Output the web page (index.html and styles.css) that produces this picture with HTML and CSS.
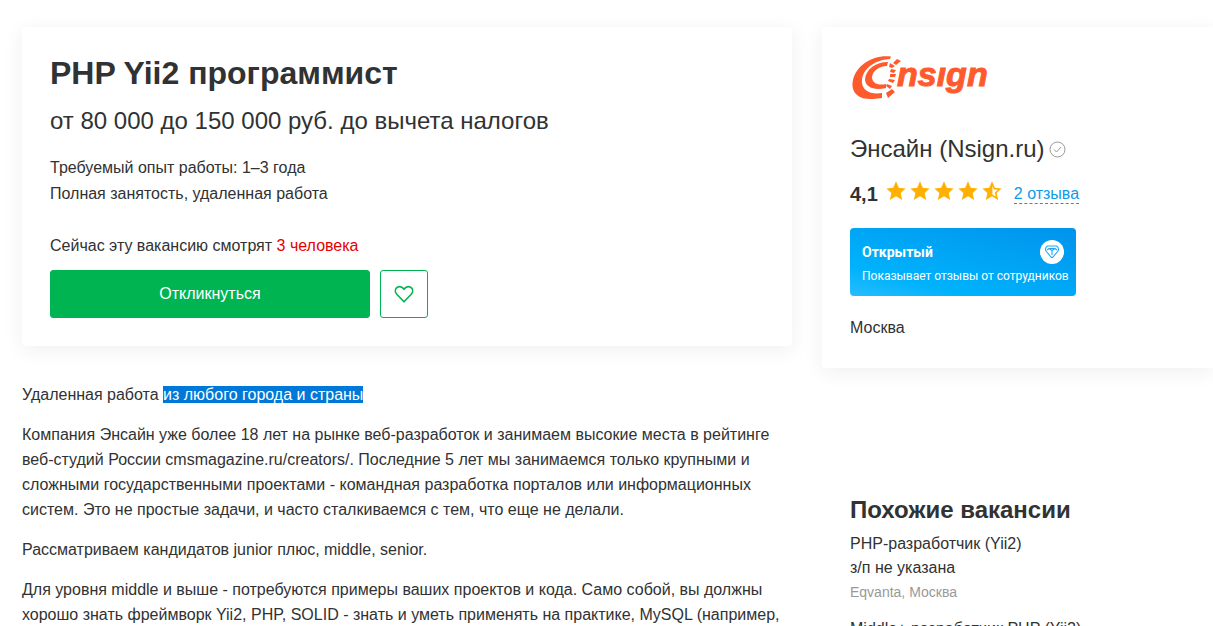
FILE: index.html
```html
<!DOCTYPE html>
<html lang="ru">
<head>
<meta charset="utf-8">
<meta name="viewport" content="width=device-width, initial-scale=1">
<title>PHP Yii2 программист</title>
<link rel="stylesheet" href="styles.css">
</head>
<body>
<div class="page">
  <main class="vacancy">
    <section class="card vacancy-header">
      <h1 class="title">PHP Yii2 программист</h1>
      <p class="salary">от 80 000 до 150 000 руб. до вычета налогов</p>
      <p class="detail">Требуемый опыт работы: 1–3 года</p>
      <p class="detail">Полная занятость, удаленная работа</p>
      <p class="viewers">Сейчас эту вакансию смотрят <span class="viewers-count">3 человека</span></p>
      <div class="actions">
        <button class="respond" type="button">Откликнуться</button>
        <button class="favorite" type="button" aria-label="В избранное">
          <svg width="20" height="18" viewBox="0 0 20 18" fill="none" stroke="currentColor" stroke-width="1.6" stroke-linejoin="round"><path d="M10 16.8 2.8 9.2C0.9 7.2 1 4.4 2.5 2.9 4.2 1.2 7 1.2 8.7 2.9L10 4.3 11.3 2.9C13 1.2 15.8 1.2 17.5 2.9 19 4.4 19.1 7.2 17.2 9.2Z"/></svg>
        </button>
      </div>
    </section>
    <section class="description">
      <p>Удаленная работа <mark>из любого города и страны</mark></p>
      <p>Компания Энсайн уже более 18 лет на рынке веб-разработок и занимаем высокие места в рейтинге веб-студий России cmsmagazine.ru/creators/. Последние 5 лет мы занимаемся только крупными и сложными государственными проектами - командная разработка порталов или информационных систем. Это не простые задачи, и часто сталкиваемся с тем, что еще не делали.</p>
      <p>Рассматриваем кандидатов junior плюс, middle, senior.</p>
      <p>Для уровня middle и выше - потребуются примеры ваших проектов и кода. Само собой, вы должны хорошо знать фреймворк Yii2, PHP, SOLID - знать и уметь применять на практике, MySQL (например,</p>
    </section>
  </main>
  <aside class="sidebar">
    <section class="card company">
      <svg class="logo" width="142" height="48" viewBox="0 0 142 48" role="img" aria-label="Nsign">
        <g fill="#ff5a2c">
          <path d="M41 1.5C24 -1 6 10 3 25C0 38 9 45 23 44L32 43V38C20 40 11 35 12 25C13 14 24 5 40 4Z"/>
          <path d="M38 7C26 7 16 14 15 24C15 32 24 36 36 33L36 29C28 31 22 28 22 22C23 15 30 11 37 11Z"/>
          <path d="M43 8 47 4 51 6 46 10ZM40 8 45 11 42 13 39 12ZM41 14 46 15 44 18 40 17ZM40 19 46 19 45 22 40 22ZM39 24 45 25 43 28 38 26ZM37 29 42 31 40 34 36 31ZM36 38 42 34 45 37 38 43Z"/>
        </g>
        <text class="logo-text" x="47" y="31">nsıgn</text>
      </svg>
      <h2 class="company-name">Энсайн (Nsign.ru)
        <svg width="17" height="17" viewBox="0 0 17 17" fill="none" stroke="#999" aria-hidden="true"><circle cx="8.5" cy="8.5" r="7.5"/><path d="M5 8.5 7.5 11 12 6"/></svg>
      </h2>
      <div class="rating">
        <strong class="score">4,1</strong>
        <svg class="stars" width="116" height="20" viewBox="0 0 116 20" fill="#ffb000" role="img" aria-label="4,1 из 5">
          <defs><path id="star" d="M10 0.3 12.8 6.8 19.6 7.4 14.6 12 16.2 19 10 15.3 3.8 19 5.4 12 0.4 7.4 7.2 6.8Z"/></defs>
          <use href="#star"/><use href="#star" x="24"/><use href="#star" x="48"/><use href="#star" x="72"/>
          <path fill-rule="evenodd" d="M106 0.3 108.8 6.8 115.6 7.4 110.6 12 112.2 19 106 15.3 99.8 19 101.4 12 96.4 7.4 103.2 6.8ZM106.4 5V13.4L109.8 15.5 108.8 11.4 111.9 8.7 107.8 8.4Z"/>
        </svg>
        <a class="reviews" href="#reviews">2 отзыва</a>
      </div>
      <div class="open-badge">
        <div class="open-row">
          <strong>Открытый</strong>
          <span class="gem"><svg width="16" height="14" viewBox="0 0 16 14" fill="none" stroke="#20a8f4" stroke-width="1.1" stroke-linejoin="round" aria-hidden="true"><path d="M4 1H12Q13 1 13.7 2L14.5 4Q14.8 5 14 6L9 12Q8 13 7 12L2 6Q1.2 5 1.5 4L2.3 2Q3 1 4 1ZM3 5 5 3.5H11L13 5M5 3.5 8 5.5 11 3.5M8 5.5V10"/></svg></span>
        </div>
        <span class="open-note">Показывает отзывы от сотрудников</span>
      </div>
      <p class="city">Москва</p>
    </section>
    <section class="similar">
      <h2 class="similar-title">Похожие вакансии</h2>
      <article class="similar-item">
        <p>PHP-разработчик (Yii2)</p>
        <p>з/п не указана</p>
        <p class="employer">Eqvanta, Москва</p>
      </article>
      <article class="similar-item">
        <p>Middle+ разработчик PHP (Yii2)</p>
      </article>
    </section>
  </aside>
</div>
</body>
</html>
```
FILE: styles.css
```css
* { box-sizing: border-box; }

body {
  margin: 0;
  background: #fff;
  color: #303233;
  font: 16px/24px "Liberation Sans", Arial, sans-serif;
}

html { scrollbar-width: none; }

h1, h2, p { margin: 0; }

.page {
  display: grid;
  grid-template-columns: minmax(0, 770px) minmax(0, 1fr);
  gap: 30px;
  padding: 27px 0 0 22px;
}

.card {
  padding: 28px;
  border-radius: 4px;
  background: #fff;
  box-shadow: 0 4px 20px rgba(48, 48, 40, 0.07);
}

.title { font-size: 32px; line-height: 36px; }
.salary { margin: 15px 0 19px; font-size: 24px; line-height: 30px; }
.detail, .viewers { line-height: 26px; }
.viewers { margin-top: 26px; }
.viewers-count { color: #e60000; }

.actions { display: flex; gap: 10px; margin-top: 11px; }

.respond, .favorite {
  height: 48px;
  border: 1px solid #00b551;
  border-radius: 3px;
  font: inherit;
}

.respond { width: 320px; background: #00b551; color: #fff; }

.favorite {
  display: grid;
  place-items: center;
  width: 48px;
  padding: 0;
  background: #fff;
  color: #00b551;
}

.description { margin-top: 36px; line-height: 25px; }
.description p + p { margin-top: 15px; }
mark { background: #0078d7; color: #fff; }

.company { border-radius: 4px 0 0 4px; }
.logo { display: block; }

.logo-text {
  fill: #ff5a2c;
  stroke: #ff5a2c;
  font: italic bold 34px "Liberation Sans", Arial, sans-serif;
}

.company-name {
  display: flex;
  align-items: center;
  gap: 4px;
  margin-top: 31px;
  font-size: 24px;
  font-weight: 400;
  line-height: 30px;
}

.rating { display: flex; align-items: center; gap: 8px; margin-top: 17px; }
.score { font-size: 20px; }
.stars { margin-bottom: 6px; }

.reviews {
  margin-left: 4px;
  border-bottom: 1px dashed;
  color: #0e9ae8;
  line-height: 18px;
  text-decoration: none;
}

.open-badge {
  width: 226px;
  height: 68px;
  margin: 21px 0 20px;
  padding: 12px;
  border-radius: 4px;
  background: linear-gradient(14deg, #28bcff 0%, #00b2fb 24%, #0093ed 100%);
  color: #fff;
  font: 12px/24px Roboto, sans-serif;
  white-space: nowrap;
}

.open-row { display: flex; align-items: center; justify-content: space-between; font-size: 14px; }

.gem {
  display: grid;
  place-items: center;
  width: 24px;
  height: 24px;
  border-radius: 50%;
  background: #fff;
}

.open-note { display: block; }

.similar { margin-top: 127px; padding-left: 28px; }
.similar-title { margin-bottom: 7px; font-size: 24px; line-height: 30px; }
.similar-item + .similar-item { margin-top: 13px; }
.employer { color: #999; font-size: 14px; }
```
